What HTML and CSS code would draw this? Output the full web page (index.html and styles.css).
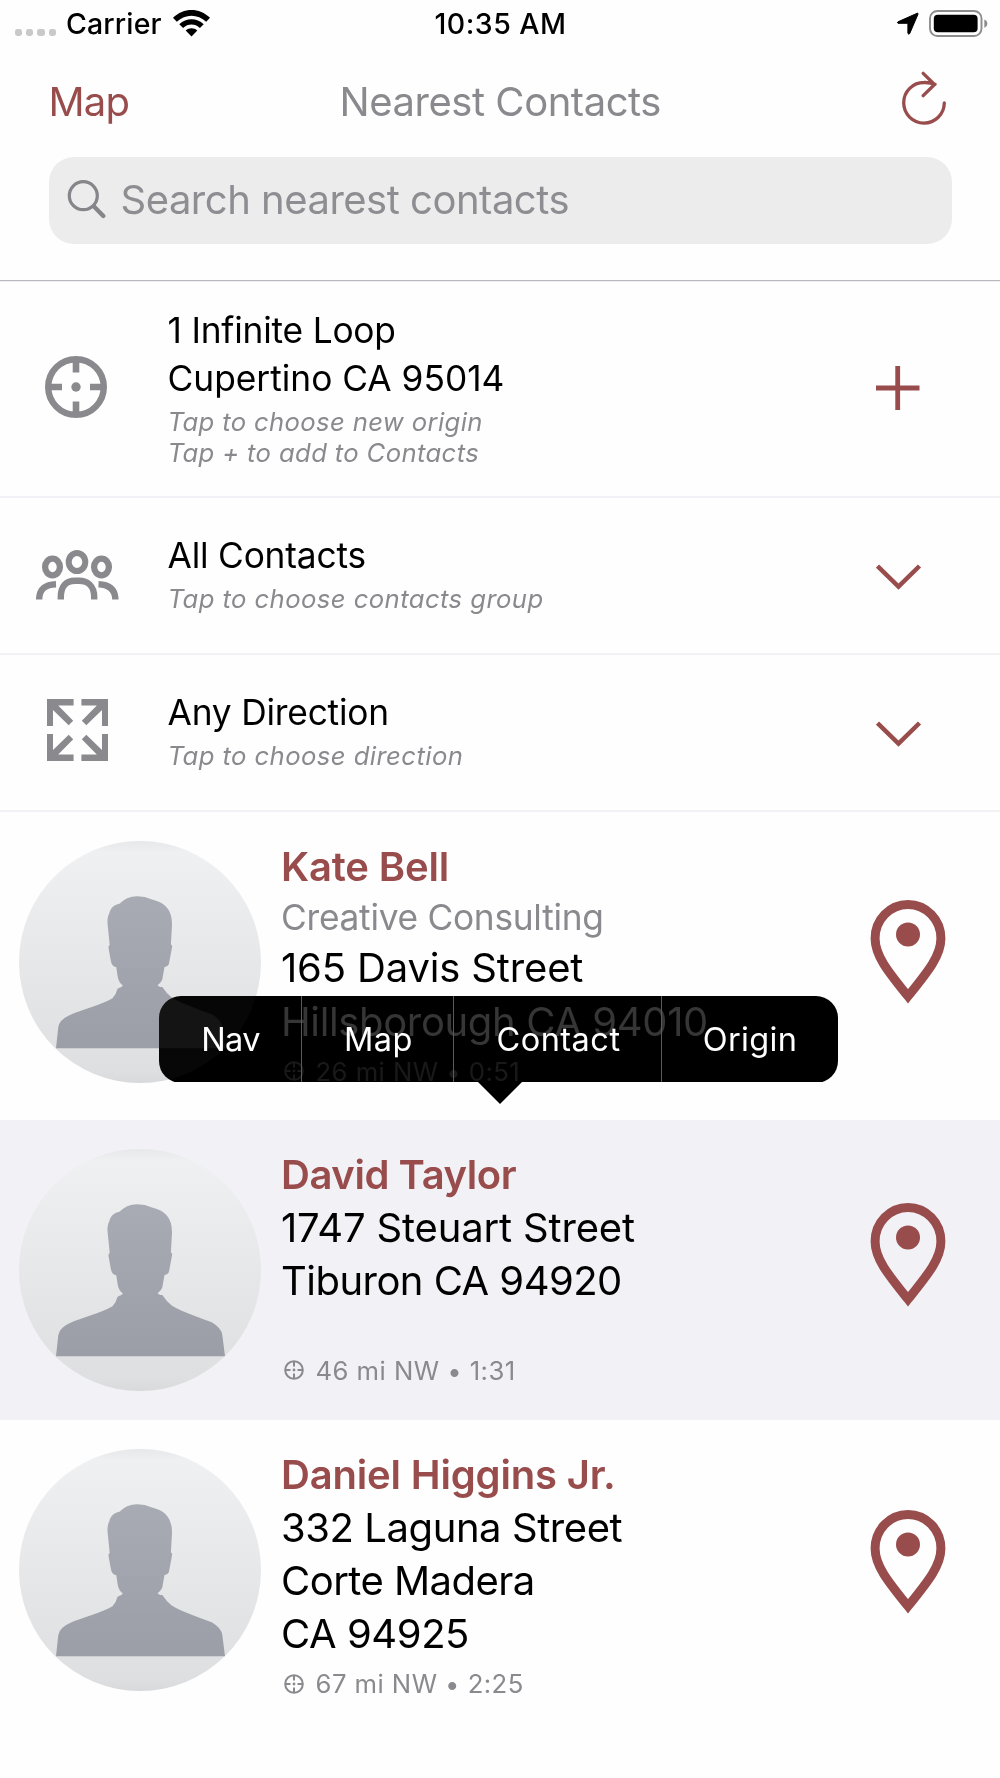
FILE: index.html
```html
<!DOCTYPE html>
<html lang="en">
<head>
<meta charset="utf-8">
<title>Nearest Contacts</title>
<link rel="stylesheet" href="styles.css">
</head>
<body>
<svg class="defs" width="0" height="0" aria-hidden="true">
  <defs>
    <linearGradient id="disc" x1="0" y1="0" x2="0" y2="1">
      <stop offset="0" stop-color="#e6e8e9"/>
      <stop offset=".05" stop-color="#eff0f2"/>
      <stop offset=".95" stop-color="#dedfe1"/>
      <stop offset="1" stop-color="#d8d9db"/>
    </linearGradient>
    <linearGradient id="bust" x1="0" y1="0" x2="0" y2="1">
      <stop offset="0" stop-color="#a8abb4"/>
      <stop offset="1" stop-color="#9b9ea6"/>
    </linearGradient>
    <symbol id="person" viewBox="0 0 242 242">
      <circle cx="121" cy="121" r="121" fill="url(#disc)"/>
      <path fill="url(#bust)" d="M118.3 55.3C111 55.3 104.500 58.500 101 62.500C94 64 91.500 67.500 90.300 72.300C88.500 76 88.200 80 88.700 84L90.700 104Q89.400 104 89.500 107L91.700 119Q92.500 125.500 97.300 126.300L98.700 135.700Q99.500 141 103.700 144.300C103.500 146.500 99.500 146.500 98.300 148.300Q97 154 93.500 157.300C82 164 62 169 51 174Q40.500 178.500 39.300 186L37 207.300H206L203.300 186Q202.500 179 192.700 173.300C178 167.500 164 163.500 152.700 156.500Q148 153 143.300 146Q139.500 146 138.700 144Q143.500 141 143.900 135L145.500 125.900Q149.500 125.500 150 122.500L153.200 105.500Q153 103.500 151.900 103.500L153 84Q153.200 73 148 66.800Q143.500 61 133 58.500Q126 55.300 118.300 55.300Z"/>
    </symbol>
    <symbol id="pin" viewBox="0 0 76 106">
      <path d="M38 96.300C18.500 72 5.100 56 5.100 38.500A32.900 34 0 0 1 70.900 38.500C70.900 56 57.500 72 38 96.300Z" fill="none" stroke="#984c4c" stroke-width="9" stroke-miterlimit="10"/>
      <circle cx="38" cy="34.500" r="12" fill="#984c4c"/>
    </symbol>
    <symbol id="target" viewBox="0 0 62 62">
      <circle cx="31" cy="31" r="27.800" fill="none" stroke="#8a898e" stroke-width="6.400"/>
      <path d="M31 5v11.600M31 45.400V57M5 31h12M45 31h12" stroke="#8a898e" stroke-width="6.600"/>
      <circle cx="31" cy="31" r="4.700" fill="#8a898e"/>
    </symbol>
    <symbol id="target-small" viewBox="0 0 20 20">
      <g fill="none" stroke="#8a898e" stroke-width="2"><circle cx="10" cy="10" r="8.800"/>
      <path d="M10 1v5.500M10 13.500v5.500M1 10h5.500M13.500 10h5.500"/></g>
      <circle cx="10" cy="10" r="1.400" fill="#8a898e"/>
    </symbol>
    <symbol id="chevron" viewBox="0 0 46 26">
      <path d="M1.500 2L22.500 22.500L43.500 2" fill="none" stroke="#984c4c" stroke-width="4.500"/>
    </symbol>
  </defs>
</svg>

<header class="header">
  <div class="status">
    <div class="status-left">
      <span class="signal"><i></i><i></i><i></i><i></i></span>
      <span class="carrier">Carrier</span>
      <svg class="wifi" viewBox="0 0 37 27" width="37" height="27">
        <path d="M0 7.800C10.500-2.600 26.500-2.600 37 7.800L33.200 11.700C24.800 3.600 12.200 3.600 3.800 11.700Z"/>
        <path d="M6.300 14.200C13.200 7.500 23.800 7.500 30.700 14.200L26.900 17.900C22 13.300 15 13.300 10.100 17.900Z"/>
        <path d="M12.700 20.500C16 17.500 21 17.500 24.300 20.500L18.500 26.600Z"/>
      </svg>
    </div>
    <div class="time">10:35 AM</div>
    <div class="status-right">
      <svg viewBox="0 0 24 24" width="24" height="24"><path d="M21.300 1.200L2 9.800Q.8 10.800 2 11.300H11.900V21.300Q12.700 22.800 13.700 21.600L22 2.200Q22.300 1 21.300 1.200Z" stroke="#000" stroke-width="1"/></svg>
      <svg viewBox="0 0 60 28" width="60" height="28">
        <rect x="1" y="1" width="51.500" height="25" rx="7.500" fill="none" stroke="#8d8d8d" stroke-width="1.900"/>
        <rect x="4.800" y="4.800" width="43.800" height="17.500" rx="4"/>
        <path d="M55.300 9.500Q58.300 10.500 58.300 13.500T55.300 17.800Z" fill="#8d8d8d"/>
      </svg>
    </div>
  </div>
  <nav class="nav">
    <a class="nav-map">Map</a>
    <h1 class="title">Nearest Contacts</h1>
    <svg class="reload" viewBox="0 0 46 56" width="46" height="56">
      <path d="M43.300 32A20.300 20.300 0 1 1 23 11.500Q29 11.300 34 13.300M22.200 2.300L33.500 13.500L22.200 24.700" fill="none" stroke="#984c4c" stroke-width="3.300" stroke-linecap="round" stroke-linejoin="round"/>
    </svg>
  </nav>
  <div class="search">
    <svg viewBox="0 0 40 40" width="40" height="40"><g fill="none" stroke="#85858a" stroke-linecap="round"><circle cx="16.300" cy="16.700" r="14" stroke-width="3.200"/><path d="M27 27.500L36.300 37" stroke-width="4.300"/></g></svg>
    <span class="placeholder">Search nearest contacts</span>
  </div>
</header>

<main>
  <section class="option option-origin">
    <div class="option-icon"><svg width="62" height="62"><use href="#target"/></svg></div>
    <div class="option-text">
      <div class="label tight">1 Infinite Loop</div>
      <div class="label wide">Cupertino CA 95014</div>
      <div class="hint first">Tap to choose new origin</div>
      <div class="hint">Tap + to add to Contacts</div>
    </div>
    <svg class="plus" viewBox="0 0 44 44" width="44" height="44"><path d="M0 22H43.500M21.700 0V44" stroke="#984c4c" stroke-width="4.800"/></svg>
  </section>
  <section class="option">
    <div class="option-icon">
      <svg viewBox="0 0 84 51" width="84" height="51" fill="none" stroke="#8a898e">
        <ellipse cx="42" cy="12" rx="8.300" ry="9" stroke-width="6"/>
        <ellipse cx="17.500" cy="17" rx="7.400" ry="8.300" stroke-width="6.300"/>
        <ellipse cx="66.500" cy="17" rx="7.400" ry="8.300" stroke-width="6.300"/>
        <path d="M25.800 49.500V47C25.800 36 31.500 30.700 40 30.700H44C52.500 30.700 59.200 36 59.200 47V49.500" stroke-width="6.400"/>
        <path d="M4.200 49.500V48C5 38.500 10.500 34.700 21 34.300M80.300 49.500V48C79.500 38.500 73.500 34.700 63.500 34.300" stroke-width="6.400"/>
      </svg>
    </div>
    <div class="option-text">
      <div class="label tight">All Contacts</div>
      <div class="hint first">Tap to choose contacts group</div>
    </div>
    <svg class="chevron" width="46" height="26"><use href="#chevron"/></svg>
  </section>
  <section class="option">
    <div class="option-icon expand">
      <svg viewBox="0 0 61 62" width="61" height="62">
        <g id="corner" fill="#8a898e"><path d="M0 0H26.600V6.500H11.200L26.200 21.700L21.700 26.300L6 11V26.900H0Z"/></g>
        <use href="#corner" transform="translate(61 0) scale(-1 1)"/>
        <use href="#corner" transform="translate(0 62) scale(1 -1)"/>
        <use href="#corner" transform="translate(61 62) scale(-1 -1)"/>
      </svg>
    </div>
    <div class="option-text">
      <div class="label tight">Any Direction</div>
      <div class="hint first">Tap to choose direction</div>
    </div>
    <svg class="chevron" width="46" height="26"><use href="#chevron"/></svg>
  </section>

  <article class="contact contact-kate">
    <svg class="avatar" width="242" height="242"><use href="#person"/></svg>
    <div class="details">
      <div class="name">Kate Bell</div>
      <div class="company">Creative Consulting</div>
      <div class="address loose">165 Davis Street</div>
      <div class="address">Hillsborough CA 94010</div>
      <div class="meta"><svg width="20" height="20"><use href="#target-small"/></svg>26 mi NW • 0:51</div>
    </div>
    <svg class="pin" width="76" height="106"><use href="#pin"/></svg>
    <div class="menu">
      <div class="menu-bar">
        <span class="nav-item">Nav</span>
        <span class="map-item">Map</span>
        <span class="contact-item">Contact</span>
        <span class="origin-item">Origin</span>
      </div>
      <svg class="menu-arrow" viewBox="0 0 44 22" width="44" height="22"><path d="M0 0H44L22 22Z"/></svg>
    </div>
  </article>

  <article class="contact contact-david">
    <svg class="avatar" width="242" height="242"><use href="#person"/></svg>
    <div class="details">
      <div class="name tighter">David Taylor</div>
      <div class="address loose">1747 Steuart Street</div>
      <div class="address tightest">Tiburon CA 94920</div>
      <div class="meta"><svg width="20" height="20"><use href="#target-small"/></svg>46 mi NW • 1:31</div>
    </div>
    <svg class="pin" width="76" height="106"><use href="#pin"/></svg>
  </article>

  <article class="contact contact-daniel">
    <svg class="avatar" width="242" height="242"><use href="#person"/></svg>
    <div class="details">
      <div class="name">Daniel Higgins Jr.</div>
      <div class="address tighter">332 Laguna Street</div>
      <div class="address tightest">Corte Madera</div>
      <div class="address tighter">CA 94925</div>
      <div class="meta"><svg width="20" height="20"><use href="#target-small"/></svg>67 mi NW • 2:25</div>
    </div>
    <svg class="pin" width="76" height="106"><use href="#pin"/></svg>
  </article>
</main>
</body>
</html>
```
FILE: styles.css
```css
* { box-sizing: border-box; }

body {
  margin: 0;
  height: 1778px;
  overflow: hidden;
  background: #fefefe;
  color: #000;
  font-family: Inter, "Liberation Sans", sans-serif;
  white-space: nowrap;
}

svg { display: block; flex: none; }
.defs { position: absolute; }

/* Header */
.header {
  height: 281px;
  margin-bottom: 1px;
  border-bottom: 1px solid #b9b8bd;
  box-shadow: 0 1px #efeef3;
}

.status {
  display: grid;
  grid-template-columns: 1fr auto 1fr;
  height: 47px;
  font-size: 28.5px;
  font-weight: 500;
  line-height: 47px;
}
.status-left { display: flex; padding-left: 14.500px; }
.signal { display: flex; gap: 4px; width: 51.500px; padding-top: 29px; }
.signal i { width: 7.400px; height: 7.400px; border-radius: 2.400px; background: #c9c9c9; }
.carrier { width: 107px; letter-spacing: .12px; }
.wifi { margin-top: 10px; }
.time { letter-spacing: .5px; padding-left: 1px; }
.status-right { display: flex; justify-content: flex-end; gap: 9px; padding: 10px 11px 0 0; }
.status-right svg:first-child { margin-top: 2px; }

.nav {
  display: grid;
  grid-template-columns: 1fr auto 1fr;
  height: 110px;
  padding: 0 53px 0 48.500px;
  font-size: 40px;
  line-height: 109px;
}
.nav-map { color: #984c4c; letter-spacing: -.8px; }
.title { margin: 0; font-size: 40px; font-weight: 400; letter-spacing: -.45px; color: #8a898e; padding-left: 5px; }
.reload { justify-self: end; margin-top: 24px; }

.search {
  display: flex;
  align-items: center;
  height: 87px;
  margin: 0 48.500px 0 48.500px;
  padding: 0 18px 3px;
  border-radius: 25px;
  background: #ececec;
}
.placeholder { margin: 1px 0 0 14px; font-size: 40px; letter-spacing: -.49px; color: #8e8d92; }

/* Filter options */
.option {
  display: flex;
  align-items: center;
  height: 157px;
  padding-right: 79px;
  border-bottom: 2px solid #f2f1f5;
}
.option-origin { height: 216px; }
.option-icon { display: flex; justify-content: center; width: 153px; margin-right: 14.500px; }
.option-origin .option-icon { width: 152px; margin-right: 15.500px; padding-bottom: 4px; }
.option-icon.expand { width: 154px; margin-right: 13.500px; padding-bottom: 5px; }
.option-text { flex: 1; align-self: flex-start; padding-top: 34px; }
.option-origin .option-text { padding-top: 24.500px; }
.label { font-size: 35.300px; line-height: 48.400px; }
.label.tight { letter-spacing: -.2px; }
.label.wide { letter-spacing: 0; }
.hint { font-size: 25.700px; font-style: italic; line-height: 31.300px; letter-spacing: .41px; color: #8a898e; }
.hint.first { margin-top: 2.500px; }
.option-origin .hint { letter-spacing: .34px; }
.plus { margin: 0 1px 2px 0; }
.chevron { margin: 3px -1px 0 0; }

/* Contacts */
.contact {
  position: relative;
  display: flex;
  align-items: flex-start;
  padding: 28px 55px 0 19px;
}
.contact-kate { height: 308px; }
.contact-david { height: 300px; background: #f2f1f6; }
.contact-daniel { height: 358px; }
.avatar { margin-top: 1px; }
.details { flex: 1; padding-left: 20px; }
.name { font-size: 40px; font-weight: 600; line-height: 53px; letter-spacing: -.17px; color: #984c4c; }
.company { padding-top: 1px; margin-bottom: -1px; font-size: 35.300px; line-height: 48.400px; letter-spacing: -.28px; color: #8a898e; }
.address { font-size: 40px; line-height: 53.100px; letter-spacing: -.36px; }
.address.loose { letter-spacing: -.16px; }
.tighter { letter-spacing: -.43px; }
.address.tightest { letter-spacing: -.53px; }
.meta {
  display: flex;
  align-items: center;
  gap: 12px;
  padding-left: 2.500px;
  font-size: 25.700px;
  line-height: 47px;
  letter-spacing: .45px;
  color: #8a898e;
}
.contact-david .meta { margin-top: 39.500px; }
.pin { margin: 59.500px -.500px 0 0; }
.contact-david .pin { margin-top: 55px; }
.contact-daniel .pin { margin-top: 62px; }

/* Callout menu floating over the first contact */
.menu { position: absolute; top: 183.500px; left: 159px; width: 679px; }
.menu-bar {
  display: flex;
  height: 86.500px;
  border-radius: 22px;
  overflow: hidden;
  -webkit-backdrop-filter: invert(1) brightness(.21) grayscale(1);
  backdrop-filter: invert(1) brightness(.21) grayscale(1);
  color: #fff;
  font-size: 32.500px;
  line-height: 88px;
  text-align: center;
}
.menu-bar span + span { border-left: 1px solid #5a5a5a; }
.nav-item { width: 142px; letter-spacing: -.6px; padding-left: 1px; }
.map-item { width: 152px; letter-spacing: .5px; padding-left: 2px; }
.contact-item { width: 208px; letter-spacing: .49px; padding-left: 2px; }
.origin-item { width: 177px; letter-spacing: .35px; }
.menu-arrow { margin-left: 319px; }
```
